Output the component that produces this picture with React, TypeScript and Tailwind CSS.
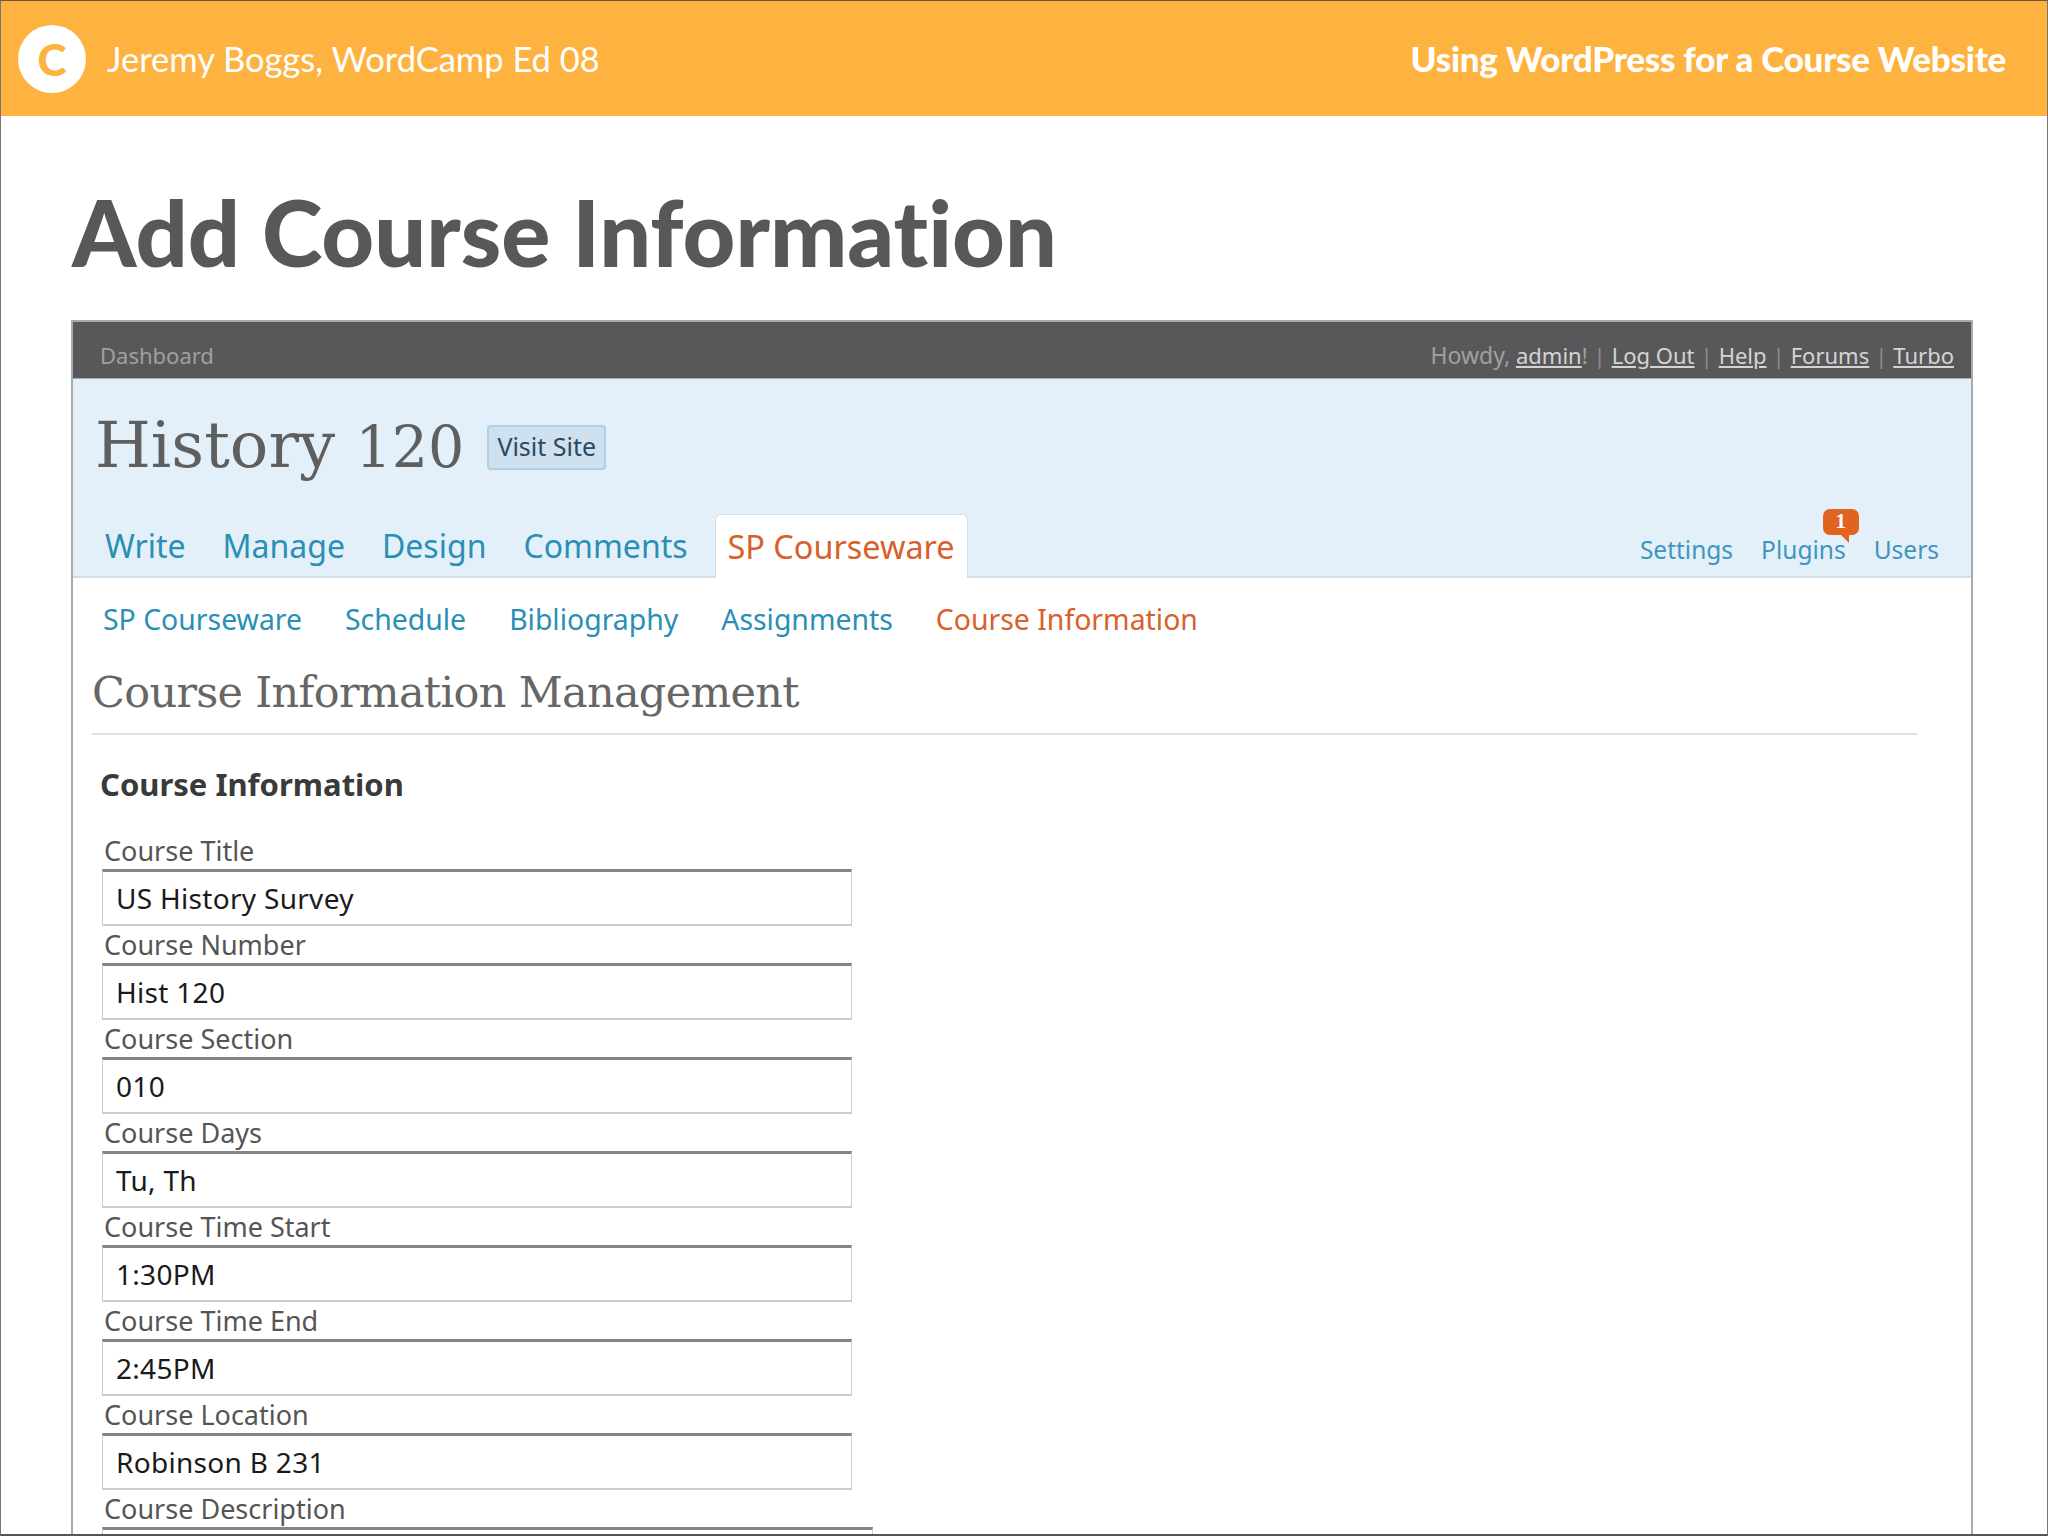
import React from 'react';

const sans = "font-['Noto_Sans',sans-serif]";
const serif = "font-['DejaVu_Serif',serif]";

const fields = [
  { label: 'Course Title', value: 'US History Survey' },
  { label: 'Course Number', value: 'Hist 120' },
  { label: 'Course Section', value: '010' },
  { label: 'Course Days', value: 'Tu, Th' },
  { label: 'Course Time Start', value: '1:30PM' },
  { label: 'Course Time End', value: '2:45PM' },
  { label: 'Course Location', value: 'Robinson B 231' },
];

const mainNav = ['Write', 'Manage', 'Design', 'Comments'];
const subNav = ['SP Courseware', 'Schedule', 'Bibliography', 'Assignments'];
const accountLinks = ['Log Out', 'Help', 'Forums', 'Turbo'];

const Field: React.FC<{ label: string; value: string }> = ({ label, value }) => (
  <div className="h-[94px]">
    <div className="h-[37px] pl-[2px] text-[27px] leading-[37px] text-[#555]">{label}</div>
    <div className="flex h-[57px] w-[750px] items-center border border-b-2 border-t-[3px] border-[#ccc] border-t-[#858585] pl-[13px] text-[28px] tracking-[0.3px] text-[#1a1a1a]">
      {value}
    </div>
  </div>
);

export default function App() {
  return (
    <div className="h-[1536px] w-[2048px] overflow-hidden border-x border-t border-b-2 border-[#777] border-t-[#6b5a3a] border-b-[#555] bg-white">
      <header className="flex h-[115px] items-center justify-between bg-[#feb340] pl-[17px] pr-[41px] font-['Lato',sans-serif] text-white [font-variant-ligatures:none]">
        <div className="flex items-center gap-[21px]">
          <div className="flex h-[68px] w-[68px] items-center justify-center rounded-full bg-white text-[44px] font-black text-[#feb340]">
            C
          </div>
          <span className="text-[34.5px]">Jeremy Boggs, WordCamp Ed 08</span>
        </div>
        <span className="text-[35px] font-black tracking-[-0.25px]">Using WordPress for a Course Website</span>
      </header>

      <div className="pl-[70px] pt-[61px]">
        <h1 className="ml-[1px] font-['Lato',sans-serif] text-[91.7px] font-black leading-[110px] text-[#58585a] [font-variant-ligatures:none]">
          Add Course Information
        </h1>

        <div className={`mt-[33px] h-[1300px] w-[1902px] border-x-2 border-t-2 border-[#aaa] ${sans}`}>
          <div className="flex h-[57px] items-end justify-between border-b border-[#9fb0bc] bg-[#58585a] pb-[8px] pl-[27px] pr-[17px] text-[22px] leading-[30px] text-[#a0a0a0]">
            <span>Dashboard</span>
            <div className="flex gap-[6px]">
              <span>
                <span className="text-[23px]">Howdy,</span> <span className="text-[#d4d4d4] underline">admin</span>!
              </span>
              {accountLinks.map((link) => (
                <React.Fragment key={link}>
                  <span className="text-[#8c8c8c]">|</span>
                  <span className="text-[#d4d4d4] underline">{link}</span>
                </React.Fragment>
              ))}
            </div>
          </div>

          <div className="h-[199px] border-b-2 border-[#cfe0ec] bg-[#e4f0f9]">
            <div className="flex items-center gap-[23px] pl-[22px] pt-[21px]">
              <span className={`${serif} text-[64px] leading-[90px] text-[#5f5f5f]`}>
                History <span className="text-[57px]">120</span>
              </span>
              <span className="mt-[2px] flex h-[45px] w-[119px] items-center justify-center rounded-[4px] border-2 border-[#b0cee4] bg-[#cfe0ee] text-[25px] text-[#2a4a60]">
                Visit Site
              </span>
            </div>
            <div className="mt-[22px] flex h-[64px] items-center justify-between pl-[32px] pr-[32px]">
              <nav className="flex items-center gap-[37px] text-[32px] text-[#2a8fb5]">
                {mainNav.map((item) => (
                  <span key={item}>{item}</span>
                ))}
                <span className="-ml-[10px] flex h-[64px] items-center rounded-t-[6px] border-x border-t border-[#cfe0ec] bg-white px-[12px] text-[32.4px] text-[#d9602a]">
                  SP Courseware
                </span>
              </nav>
              <nav className="flex items-center gap-[28px] pt-[8px] text-[24.5px] text-[#3f96bd]">
                <span>Settings</span>
                <span className="relative">
                  Plugins
                  <span className="absolute -top-[23px] right-[-13px] flex h-[26px] w-[36px] items-center justify-center rounded-[7px] bg-[#e06320] font-['Liberation_Serif',serif] text-[21px] font-bold leading-none text-white">
                    1
                    <span className="absolute -bottom-[8px] right-[10px] border-l-[8px] border-t-[8px] border-l-transparent border-t-[#e06320]" />
                  </span>
                </span>
                <span>Users</span>
              </nav>
            </div>
          </div>

          <nav className="flex h-[84px] items-center gap-[43px] pb-[2px] pl-[30px] text-[28.4px] text-[#2a8fb5]">
            {subNav.map((item) => (
              <span key={item}>{item}</span>
            ))}
            <span className="text-[#d9602a]">Course Information</span>
          </nav>

          <div className="mx-[19px] h-[73px] w-[1825px] border-b-2 border-[#e0e0e0]">
            <h2 className={`${serif} text-[43px] leading-[60px] tracking-[-0.7px] text-[#666]`}>
              Course Information Management
            </h2>
          </div>

          <h3 className="ml-[27px] mt-[27px] text-[31px] font-bold leading-[44px] text-[#3a3a3a]">Course Information</h3>

          <div className="ml-[29px] mt-[26px]">
            {fields.map((field) => (
              <Field key={field.label} {...field} />
            ))}
            <div className="h-[37px] pl-[2px] text-[27px] leading-[37px] text-[#555]">Course Description</div>
            <div className="h-[60px] w-[771px] border border-t-[3px] border-[#ccc] border-t-[#858585]" />
          </div>
        </div>
      </div>
    </div>
  );
}
